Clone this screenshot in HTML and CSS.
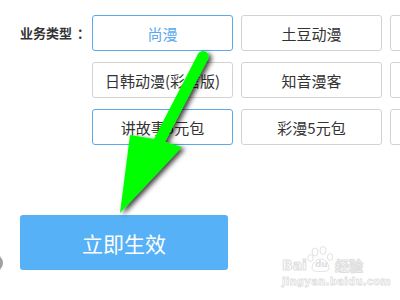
FILE: index.html
```html
<!DOCTYPE html>
<html lang="zh-CN">
<head>
<meta charset="utf-8">
<link rel="stylesheet" href="styles.css">
</head>
<body>
<div class="page">
  <div class="row">
    <div class="label">业务类型<span class="colon">：</span></div>
    <div class="options">
      <div class="opt active">尚漫</div>
      <div class="opt">土豆动漫</div>
      <div class="opt"></div>
      <div class="opt">日韩动漫(彩信版)</div>
      <div class="opt">知音漫客</div>
      <div class="opt"></div>
      <div class="opt selected">讲故事5元包</div>
      <div class="opt">彩漫5元包</div>
      <div class="opt"></div>
    </div>
  </div>
  <div class="submit">立即生效</div>
</div>
<div class="dot"></div>
<div class="watermark">
  <div class="wm-top"><span class="wm-bai">Bai</span><span class="wm-paw"><svg width="28" height="26" viewBox="0 0 28 26"><g fill="#fff" stroke="#e2e2e2" stroke-width="1"><ellipse cx="8" cy="6" rx="3" ry="4"/><ellipse cx="16" cy="4.5" rx="3" ry="4"/><ellipse cx="3.5" cy="12" rx="2.6" ry="3.4"/><ellipse cx="23" cy="11" rx="2.6" ry="3.4"/><path d="M5 22c0-5 5-9 8.5-9s8.5 4 8.5 9c0 3-3 3.5-8.5 3.5S5 25 5 22z"/></g></svg><span class="wm-du">du</span></span><span class="wm-cn">经验</span></div>
  <div class="wm-url">jingyan.baidu.com</div>
</div>
<svg class="arrow" width="400" height="300" viewBox="0 0 400 300">
  <defs>
    <filter id="sh" x="-20%" y="-20%" width="150%" height="150%">
      <feDropShadow dx="3" dy="2" stdDeviation="2.5" flood-color="#000" flood-opacity="0.75"/>
    </filter>
  </defs>
  <g filter="url(#sh)" fill="#00ff00">
    <polygon points="198,54 208,59 165,142 182,147 120,213 130,135 154,139"/>
    <circle cx="203" cy="56.5" r="5.6"/>
  </g>
</svg>
</body>
</html>
```
FILE: styles.css
```css
html, body {
  margin: 0;
  padding: 0;
  width: 400px;
  height: 300px;
  overflow: hidden;
  background: #fff;
  font-family: "Microsoft YaHei", "Noto Sans CJK SC", sans-serif;
}
.page {
  padding-top: 15px;
}
.row {
  display: flex;
  align-items: flex-start;
}
.label {
  padding-left: 20px;
  width: 66px;
  margin-right: 6px;
  flex: none;
  height: 36px;
  line-height: 36px;
  font-size: 13px;
  font-weight: bold;
  color: #333;
  white-space: nowrap;
}
.colon {
  padding-left: 5px;
}
.options {
  display: grid;
  grid-template-columns: 141px 141px 141px;
  gap: 11px 8px;
  flex: 1;
  min-width: 0;
  overflow: hidden;
}
.opt {
  box-sizing: border-box;
  width: 141px;
  height: 36px;
  border: 1px solid #d2d2d2;
  border-radius: 3px;
  display: flex;
  align-items: center;
  justify-content: center;
  font-size: 15px;
  color: #333;
  white-space: nowrap;
}
.opt.active {
  border-color: #5aa9ec;
  color: #5aa9ee;
}
.opt.selected {
  border-color: #5aa9ec;
}
.submit {
  margin: 70px 0 0 20px;
  width: 208px;
  height: 55px;
  background: #56b1f6;
  border-radius: 3px;
  color: #fff;
  font-size: 21px;
  display: flex;
  align-items: center;
  justify-content: center;
}
.dot {
  position: absolute;
  left: -15px;
  top: 254px;
  width: 18px;
  height: 18px;
  border-radius: 50%;
  background: #a0a0a0;
}
.watermark {
  position: absolute;
  left: 282px;
  top: 246px;
  color: #fff;
  font-family: "DejaVu Sans", sans-serif;
}
.wm-top {
  display: flex;
  align-items: flex-end;
  height: 26px;
}
.wm-bai {
  font-size: 14px;
  font-weight: bold;
  line-height: 14px;
  -webkit-text-stroke: 1px #dedede;
}
.wm-paw {
  position: relative;
  width: 28px;
  height: 26px;
  display: block;
}
.wm-paw svg { display: block; }
.wm-du {
  position: absolute;
  left: 8px;
  top: 13px;
  font-size: 9px;
  line-height: 10px;
  color: #ddd;
  font-weight: bold;
}
.wm-cn {
  font-family: "Noto Sans CJK SC", sans-serif;
  font-size: 14px;
  line-height: 14px;
  font-weight: bold;
  -webkit-text-stroke: 1px #dedede;
}
.wm-url {
  margin-top: 4px;
  font-size: 10px;
  line-height: 11px;
  font-weight: bold;
  -webkit-text-stroke: 0.8px #e0e0e0;
  letter-spacing: 0.3px;
}
.arrow {
  position: absolute;
  left: 0;
  top: 0;
  pointer-events: none;
}
```
